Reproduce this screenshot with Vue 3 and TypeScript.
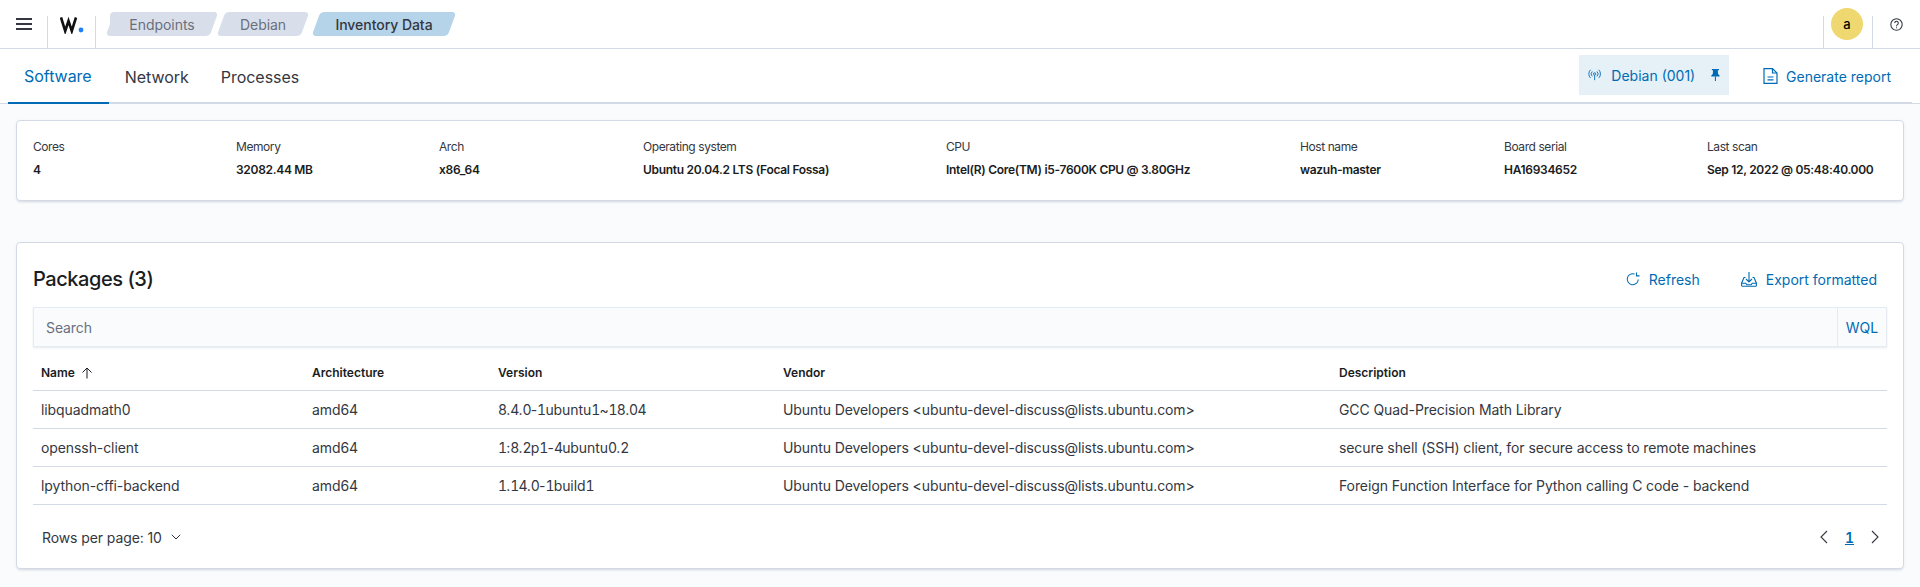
<template>
  <div class="page">
    <header class="topbar">
      <button class="menu-btn" aria-label="Menu">
        <svg width="16" height="14" viewBox="0 0 16 14" fill="#343741"><path d="M0 1h16v2H0zM0 6h16v2H0zM0 11h16v2H0z" /></svg>
      </button>
      <div class="logo">
        <svg width="26" height="18" viewBox="0 0 26 18" aria-label="Wazuh">
          <path d="M1 1.5 5.2 15 8.5 5 11.8 15 16 1.5" fill="none" stroke="#111" stroke-width="2.6" stroke-linejoin="miter" />
          <circle cx="21" cy="14" r="2.4" fill="#1e80ff" />
        </svg>
      </div>
      <nav class="crumbs">
        <span v-for="(crumb, i) in crumbs" :key="crumb" class="crumb" :class="{ current: i === crumbs.length - 1 }">
          <span class="crumb-text">{{ crumb }}</span>
        </span>
      </nav>
      <div class="top-right">
        <div class="avatar-cell"><span class="avatar">a</span></div>
        <div class="help-cell">
          <svg width="13" height="13" viewBox="0 0 16 16" fill="none" stroke="#343741" stroke-width="1.3">
            <circle cx="8" cy="8" r="7" />
            <path d="M5.8 6.2a2.2 2.2 0 1 1 3.4 1.9c-.8.5-1.2.9-1.2 1.9" />
            <path d="M8 11.4v1.2" />
          </svg>
        </div>
      </div>
    </header>

    <div class="tabbar">
      <div class="tabbar-row">
        <div class="tabs">
          <button v-for="(tab, i) in tabs" :key="tab" class="tab" :class="{ active: i === 0 }">{{ tab }}</button>
        </div>
        <div class="tab-actions">
          <div class="agent-pin">
            <svg width="18" height="16" viewBox="0 0 18 16" fill="none" stroke="#006bb4" stroke-width="1.2">
              <circle cx="9" cy="6.5" r="1.6" />
              <path d="M9 8.2V15" />
              <path d="M5.8 3.2a4.6 4.6 0 0 0 0 6.6M12.2 3.2a4.6 4.6 0 0 1 0 6.6" />
              <path d="M3.4 1a7.8 7.8 0 0 0 0 11M14.6 1a7.8 7.8 0 0 1 0 11" />
            </svg>
            <span class="agent-name">Debian (001)</span>
            <svg width="12" height="16" viewBox="0 0 12 16" fill="#006bb4">
              <path d="M1.2 0h9.6v1.6H9.2l.4 5 2 2V10H.4V8.6l2-2 .4-5H1.2z" />
              <path d="M5.3 10h1.4v6H5.3z" />
            </svg>
          </div>
          <button class="link-btn report">
            <svg width="15" height="16" viewBox="0 0 15 16" fill="none" stroke="#006bb4" stroke-width="1.2">
              <path d="M1 .6h8.5L14 5v10.4H1z" />
              <path d="M9.5.6V5H14" />
              <path d="M4.5 9h6M4.5 11.8h6" />
            </svg>
            <span>Generate report</span>
          </button>
        </div>
      </div>
    </div>

    <main class="content">
      <section class="panel summary">
        <div v-for="item in summary" :key="item.label" class="stat">
          <div class="stat-label">{{ item.label }}</div>
          <div class="stat-value">{{ item.value }}</div>
        </div>
      </section>

      <section class="panel packages">
        <div class="panel-head">
          <h2 class="panel-title">Packages (3)</h2>
          <div class="panel-actions">
            <button class="link-btn">
              <svg width="14" height="14" viewBox="0 0 16 16" fill="none" stroke="#006bb4" stroke-width="1.2">
                <path d="M14 8.5A6.3 6.3 0 1 1 9.8 2.3" />
                <path d="M12 .6v3.8h3.5" />
              </svg>
              <span>Refresh</span>
            </button>
            <button class="link-btn">
              <svg width="16" height="16" viewBox="0 0 16 16" fill="none" stroke="#006bb4" stroke-width="1.1">
                <path d="M4.5 6.5H3L.6 12.2v2.2a.8.8 0 0 0 .8.8h13.2a.8.8 0 0 0 .8-.8v-2.2L13 6.5h-1.5" />
                <path d="M.6 12.2h4.2l1 1.5h4.4l1-1.5h4.2" />
                <path d="M8 1v10M5 8l3 3 3-3" />
              </svg>
              <span>Export formatted</span>
            </button>
          </div>
        </div>

        <div class="search">
          <span class="search-hint">Search</span>
          <span class="wql">WQL</span>
        </div>

        <table class="grid">
          <colgroup>
            <col class="col-name" />
            <col class="col-arch" />
            <col class="col-version" />
            <col class="col-vendor" />
            <col />
          </colgroup>
          <thead>
            <tr>
              <th>
                Name
                <svg class="sort" width="12" height="12" viewBox="0 0 12 12" fill="none" stroke="#1a1c21" stroke-width="1"><path d="M6 11.5V1M1.5 5.5 6 1l4.500 4.500" /></svg>
              </th>
              <th>Architecture</th>
              <th>Version</th>
              <th>Vendor</th>
              <th>Description</th>
            </tr>
          </thead>
          <tbody>
            <tr v-for="row in packages" :key="row.name">
              <td>{{ row.name }}</td>
              <td>{{ row.arch }}</td>
              <td>
                <span v-for="(part, i) in versionParts(row.version)" :key="i" :class="{ digits: i % 2 === 1 }">{{ part }}</span>
              </td>
              <td>{{ row.vendor }}</td>
              <td>{{ row.description }}</td>
            </tr>
          </tbody>
        </table>

        <div class="pager">
          <div class="rows-per-page">
            Rows per page: 10
            <svg width="10" height="6" viewBox="0 0 10 6" fill="none" stroke="#343741" stroke-width="1"><path d="M.8.8 5 5 9.2.8" /></svg>
          </div>
          <div class="pages">
            <svg width="8" height="14" viewBox="0 0 8 14" fill="none" stroke="#343741" stroke-width="1.1"><path d="M7 1 1 7l6 6" /></svg>
            <span class="page-num">1</span>
            <svg width="8" height="14" viewBox="0 0 8 14" fill="none" stroke="#343741" stroke-width="1.1"><path d="m1 1 6 6-6 6" /></svg>
          </div>
        </div>
      </section>
    </main>
  </div>
</template>

<script setup lang="ts">
interface Pkg {
  name: string
  arch: string
  version: string
  vendor: string
  description: string
}

const crumbs = ['Endpoints', 'Debian', 'Inventory Data']
const tabs = ['Software', 'Network', 'Processes']

const summary = [
  { label: 'Cores', value: '4' },
  { label: 'Memory', value: '32082.44 MB' },
  { label: 'Arch', value: 'x86_64' },
  { label: 'Operating system', value: 'Ubuntu 20.04.2 LTS (Focal Fossa)' },
  { label: 'CPU', value: 'Intel(R) Core(TM) i5-7600K CPU @ 3.80GHz' },
  { label: 'Host name', value: 'wazuh-master' },
  { label: 'Board serial', value: 'HA16934652' },
  { label: 'Last scan', value: 'Sep 12, 2022 @ 05:48:40.000' }
]

const vendor = 'Ubuntu Developers <ubuntu-devel-discuss@lists.ubuntu.com>'

const packages: Pkg[] = [
  { name: 'libquadmath0', arch: 'amd64', version: '8.4.0-1ubuntu1~18.04', vendor, description: 'GCC Quad-Precision Math Library' },
  { name: 'openssh-client', arch: 'amd64', version: '1:8.2p1-4ubuntu0.2', vendor, description: 'secure shell (SSH) client, for secure access to remote machines' },
  { name: 'lpython-cffi-backend', arch: 'amd64', version: '1.14.0-1build1', vendor, description: 'Foreign Function Interface for Python calling C code - backend' }
]

// odd entries are the digit runs, they get tabular figures
function versionParts(version: string) {
  return version.split(/(\d+)/)
}
</script>

<style>
body {
  margin: 0;
  background: #fafbfd;
}
</style>

<style scoped>
.page {
  height: 587px;
  overflow: hidden;
  font-family: Inter, "Liberation Sans", sans-serif;
  font-size: 14px;
  color: #343741;
  background: #fafbfd;
}

button {
  border: 0;
  padding: 0;
  background: none;
  font: inherit;
  cursor: pointer;
}

.topbar {
  display: flex;
  height: 48px;
  background: #fff;
  border-bottom: 1px solid #d3dae6;
}

.menu-btn {
  display: flex;
  align-items: center;
  justify-content: center;
  width: 47px;
  height: 48px;
}

.logo {
  width: 47px;
  height: 32px;
  margin-top: 16px;
  border-left: 1px solid #d3dae6;
  border-right: 1px solid #d3dae6;
}

.logo svg {
  display: block;
  margin: 0 0 0 12px;
}

.crumbs {
  display: flex;
  margin: 12px 0 0 14px;
}

.crumb {
  position: relative;
  display: flex;
  align-items: center;
  justify-content: center;
  height: 24px;
  color: #69707d;
  letter-spacing: -0.05px;
}

/* the slanted plate sits behind the label */
.crumb::before {
  content: "";
  position: absolute;
  inset: 0;
  border-radius: 4px;
  background: #d9dfea;
  transform: skewX(-20deg);
}

.crumb:nth-child(1) {
  width: 104px;
}

/* first crumb keeps a straight left edge */
.crumb:nth-child(1)::after {
  content: "";
  position: absolute;
  top: 0;
  bottom: 0;
  left: 0;
  width: 24px;
  border-radius: 4px 0 0 4px;
  background: #d9dfea;
}

.crumb:nth-child(2) {
  width: 84px;
  margin-left: 7px;
}

.crumb:nth-child(3) {
  width: 136px;
  margin-left: 11px;
  color: #343741;
  font-weight: 500;
}

.crumb:nth-child(3)::before {
  background: #b6d4e9;
}

.crumb-text {
  position: relative;
  z-index: 1;
}

.top-right {
  display: flex;
  margin-left: auto;
}

.avatar-cell {
  display: flex;
  justify-content: center;
  width: 48px;
  height: 32px;
  margin-top: 16px;
  border-left: 1px solid #d3dae6;
  border-right: 1px solid #d3dae6;
}

.avatar {
  display: flex;
  align-items: center;
  justify-content: center;
  width: 32px;
  height: 32px;
  margin: -8px 2px 0 0;
  border-radius: 50%;
  color: #000;
  font-size: 13px;
  font-weight: 500;
  background: #efd86f;
}

.help-cell {
  display: flex;
  align-items: center;
  justify-content: center;
  width: 47px;
  height: 48px;
}

.tabbar {
  height: 55px;
  box-sizing: border-box;
  padding: 0 8px;
  background: #fff;
  border-bottom: 1px solid #d3dae6;
}

.tabbar-row {
  display: flex;
  justify-content: space-between;
  height: 55px;
  box-sizing: border-box;
  border-bottom: 2px solid #d3dae6;
}

.tabs {
  display: flex;
  height: 55px;
}

.tab {
  height: 55px;
  padding: 0 16px;
  font-size: 16px;
  letter-spacing: -0.03px;
  color: #343741;
}

.tab.active {
  padding-right: 17px;
  color: #006bb4;
  border-bottom: 2px solid #006bb4;
}

.tab-actions {
  display: flex;
  align-items: flex-start;
}

.agent-pin {
  display: flex;
  align-items: center;
  flex: none;
  width: 150px;
  height: 40px;
  margin-top: 6px;
  padding: 0 9px;
  box-sizing: border-box;
  white-space: nowrap;
  background: #e5f0f7;
  color: #006bb4;
}

.agent-name {
  margin: 0 16px 0 10px;
}

.link-btn {
  display: flex;
  align-items: center;
  gap: 9px;
  color: #006bb4;
  font-size: 14px;
  white-space: nowrap;
}

.report {
  gap: 8px;
  height: 40px;
  margin: 7px 21px 0 34px;
}

.content {
  padding: 16px 16px 0;
}

.panel {
  box-sizing: border-box;
  background: #fff;
  border: 1px solid #d3dae6;
  border-radius: 4px;
  box-shadow: 0 2px 2px -1px rgba(152, 162, 179, 0.3), 0 1px 5px -2px rgba(152, 162, 179, 0.3);
}

.summary {
  display: grid;
  grid-template-columns: 203px 203px 204px 303px 354px 204px 203px 1fr;
  height: 81px;
  padding: 17px 16px 0;
}

.stat-label {
  font-size: 12px;
  line-height: 18px;
  letter-spacing: -0.42px;
  color: #343741;
}

.stat-value {
  margin-top: 5px;
  font-size: 12px;
  font-weight: 600;
  line-height: 18px;
  letter-spacing: -0.3px;
  color: #1a1c21;
}

.packages {
  height: 327px;
  margin-top: 41px;
  padding: 0 16px;
}

.panel-head {
  display: flex;
  align-items: center;
  justify-content: space-between;
  height: 64px;
  padding-top: 8px;
  box-sizing: border-box;
}

.panel-title {
  margin: 0;
  font-size: 20px;
  font-weight: 500;
  letter-spacing: -0.45px;
  color: #1a1c21;
}

.panel-actions {
  display: flex;
  gap: 41px;
  padding-right: 10px;
}

.search {
  display: flex;
  align-items: center;
  justify-content: space-between;
  height: 40px;
  box-sizing: border-box;
  padding-left: 12px;
  background: #fafbfd;
  border: 1px solid #e6ebf2;
  box-shadow: 0 1px 2px rgba(152, 162, 179, 0.25);
}

.search-hint {
  color: #69707d;
  letter-spacing: -0.1px;
}

.wql {
  display: flex;
  align-items: center;
  justify-content: center;
  width: 48px;
  height: 100%;
  color: #006bb4;
  border-left: 1px solid #e6ebf2;
}

.grid {
  width: 100%;
  margin-top: 8px;
  border-collapse: collapse;
  table-layout: fixed;
}

.col-name {
  width: 271px;
}

.col-arch {
  width: 186px;
}

.col-version {
  width: 285px;
}

.col-vendor {
  width: 556px;
}

.grid th {
  height: 35px;
  padding: 0 8px;
  font-size: 12px;
  font-weight: 600;
  text-align: left;
  color: #1a1c21;
  border-bottom: 1px solid #d3dae6;
}

.grid td {
  height: 37px;
  padding: 0 8px;
  white-space: nowrap;
  font-size: 14px;
  letter-spacing: -0.09px;
  border-bottom: 1px solid #d3dae6;
}

.digits {
  font-feature-settings: "tnum" 1;
  letter-spacing: -0.8px;
}

.sort {
  margin-left: 3px;
  vertical-align: -2px;
}

.pager {
  display: flex;
  align-items: center;
  justify-content: space-between;
  height: 64px;
  padding: 0 8px 0 9px;
}

.rows-per-page {
  display: flex;
  align-items: center;
  gap: 9px;
  letter-spacing: -0.1px;
}

.pages {
  display: flex;
  align-items: center;
  gap: 17px;
}

.page-num {
  color: #006bb4;
  font-weight: 600;
  font-feature-settings: "tnum" 1;
  text-decoration: underline;
}
</style>
